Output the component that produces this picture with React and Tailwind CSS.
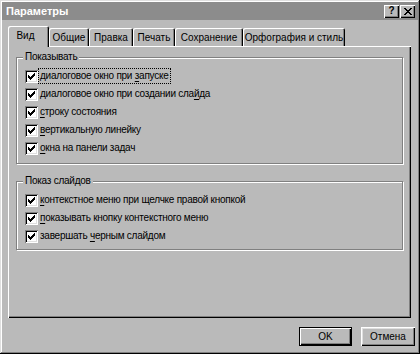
const font = { fontFamily: '"Liberation Sans", Arial, sans-serif' }

const tabs = [
  { label: "Вид", w: "w-[41px]", active: true },
  { label: "Общие", w: "w-[40px]" },
  { label: "Правка", w: "w-[44px]" },
  { label: "Печать", w: "w-[42px]" },
  { label: "Сохранение", w: "w-[68px]" },
  { label: "Орфография и стиль", w: "w-[102px]" },
]

const showItems = [
  { pre: "диалоговое окно при ", key: "з", post: "апуске", focus: true },
  { pre: "диалоговое окно при создании сла", key: "й", post: "да" },
  { pre: "", key: "с", post: "троку состояния" },
  { pre: "", key: "в", post: "ертикальную линейку" },
  { pre: "", key: "о", post: "кна на панели задач" },
]

const slideItems = [
  { pre: "", key: "к", post: "онтекстное меню при щелчке правой кнопкой" },
  { pre: "", key: "п", post: "оказывать кнопку контекстного меню" },
  { pre: "завершать ", key: "ч", post: "ерным слайдом" },
]

function CheckBox() {
  return (
    <div className="w-[13px] h-[13px] shrink-0 bg-white shadow-[inset_1px_1px_#808080,inset_-1px_-1px_#fff,inset_2px_2px_#000,inset_-2px_-2px_#dfdfdf]">
      <svg width="13" height="13" viewBox="0 0 13 13" shapeRendering="crispEdges">
        <path
          fill="#000"
          d="M9 3h1v1h-1z M8 4h2v1h-2z M3 5h1v1h-1z M7 5h3v1h-3z M3 6h2v1h-2z M6 6h3v1h-3z M3 7h5v1h-5z M4 8h3v1h-3z M5 9h1v1h-1z"
        />
      </svg>
    </div>
  )
}

function Row({ item }) {
  return (
    <div className="h-[18px] flex items-center">
      <CheckBox />
      <span
        className={`px-[1px] leading-[14px] whitespace-nowrap tracking-[-0.25px] border ${item.focus ? "border-dotted border-black" : "border-transparent"}`}
      >
        {item.pre}
        <span className="underline underline-offset-[2px]">{item.key}</span>
        {item.post}
      </span>
    </div>
  )
}

function Group({ title, items, className }) {
  return (
    <div className={`border border-[#808080] shadow-[inset_1px_1px_#fff,1px_1px_#fff] pl-[8px] ${className}`}>
      {/* legend sits on the top border */}
      <div className="-mt-2 mb-[3px] -ml-[2px] h-[14px] leading-[14px]">
        <span className="px-[2px] bg-[#bababa] tracking-[-0.25px]">{title}</span>
      </div>
      {items.map((item, i) => (
        <Row key={i} item={item} />
      ))}
    </div>
  )
}

function Button({ children, def }) {
  return (
    <button
      className={`h-[19px] flex items-center justify-center bg-[#bababa] ${def
        ? "w-[53px] shadow-[inset_1px_1px_#000,inset_-1px_-1px_#000,inset_2px_2px_#fff,inset_-2px_-2px_#000,inset_-3px_-3px_#808080]"
        : "w-[54px] shadow-[inset_1px_1px_#fff,inset_-1px_-1px_#000,inset_-2px_-2px_#808080,inset_2px_2px_#dfdfdf]"
        }`}
    >
      {children}
    </button>
  )
}

export default function App() {
  return (
    <div
      style={font}
      className="w-[420px] h-[354px] p-[2px] flex flex-col bg-[#bababa] text-[10px] text-black shadow-[inset_-1px_-1px_#000,inset_1px_1px_#dfdfdf,inset_-2px_-2px_#808080,inset_2px_2px_#fff]"
    >
      {/* title bar */}
      <div className="h-[18px] flex items-center justify-between bg-[#8c8c8c] pl-[4px] pr-[3px]">
        <span className="text-white font-bold text-[11px]">Параметры</span>
        <div className="flex gap-[1px]">
          <div className="w-[15px] h-[13px] flex items-center justify-center bg-[#bababa] text-[10px] font-bold leading-none shadow-[inset_1px_1px_#fff,inset_-1px_-1px_#000,inset_-2px_-2px_#808080]">
            ?
          </div>
          <div className="w-[15px] h-[13px] flex items-center justify-center bg-[#bababa] shadow-[inset_1px_1px_#fff,inset_-1px_-1px_#000,inset_-2px_-2px_#808080]">
            <svg width="8" height="7" viewBox="0 0 8 7" shapeRendering="crispEdges">
              <path
                fill="#000"
                d="M0 0h2v1h-2z M6 0h2v1h-2z M1 1h2v1h-2z M5 1h2v1h-2z M2 2h4v1h-4z M3 3h2v1h-2z M2 4h4v1h-4z M1 5h2v1h-2z M5 5h2v1h-2z M0 6h2v1h-2z M6 6h2v1h-2z"
              />
            </svg>
          </div>
        </div>
      </div>

      {/* tabs */}
      <div className="mt-[6px] px-[6px] h-[20px] flex items-end">
        {tabs.map((t) => (
          <div
            key={t.label}
            className={`${t.w} flex items-center justify-center whitespace-nowrap rounded-t-[2px] ${t.active
              ? "h-[21px] -mb-[1px] relative z-10 bg-[#bababa] pb-[2px] pr-[6px] shadow-[inset_1px_1px_#fff,inset_-1px_0_#000,inset_-2px_0_#808080]"
              : "h-[18px] shadow-[inset_1px_1px_#fff,inset_-1px_0_#000,inset_-2px_0_#808080]"
              }`}
          >
            {t.label}
          </div>
        ))}
      </div>

      {/* panel */}
      <div className="ml-[6px] mr-[7px] h-[272px] pt-[11px] px-[8px] shadow-[inset_1px_1px_#fff,inset_-1px_-1px_#000,inset_-2px_-2px_#808080]">
        <Group title="Показывать" items={showItems} className="h-[107px]" />
        <Group title="Показ слайдов" items={slideItems} className="mt-[17px] h-[69px]" />
      </div>

      {/* buttons */}
      <div className="mt-[9px] pr-[3px] flex justify-end gap-[9px]">
        <Button def>OK</Button>
        <Button>Отмена</Button>
      </div>
    </div>
  )
}
